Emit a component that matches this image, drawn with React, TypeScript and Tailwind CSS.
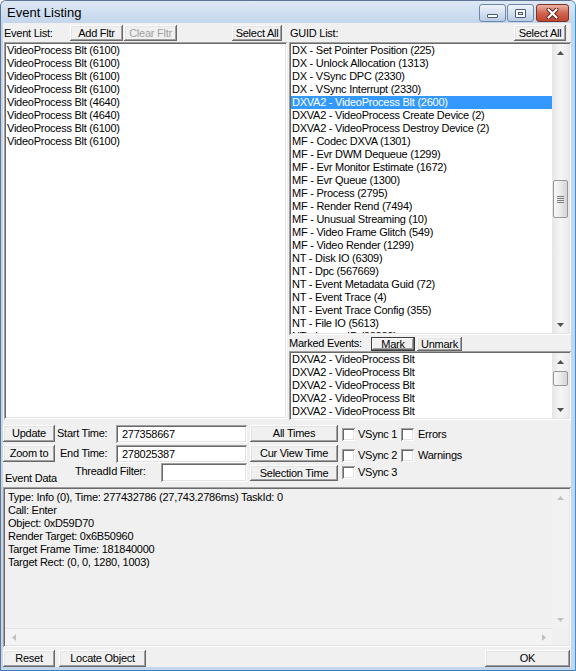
import React from "react";

const raised =
  "shadow-[inset_-1px_-1px_0_0_#696969,inset_1px_1px_0_0_#ffffff,inset_-2px_-2px_0_0_#a0a0a0,inset_2px_2px_0_0_#e3e3e3]";
const raisedDefault =
  "shadow-[inset_0_0_0_1px_#3c3c3c,inset_-2px_-2px_0_0_#696969,inset_2px_2px_0_0_#ffffff,inset_-3px_-3px_0_0_#a0a0a0]";
const sunken =
  "shadow-[inset_1px_1px_0_0_#a0a0a0,inset_-1px_-1px_0_0_#ffffff,inset_2px_2px_0_0_#696969,inset_-2px_-2px_0_0_#e3e3e3]";

const eventRows = [
  "VideoProcess Blt (6100)",
  "VideoProcess Blt (6100)",
  "VideoProcess Blt (6100)",
  "VideoProcess Blt (6100)",
  "VideoProcess Blt (4640)",
  "VideoProcess Blt (4640)",
  "VideoProcess Blt (6100)",
  "VideoProcess Blt (6100)",
];

const guidRows = [
  "DX - Set Pointer Position (225)",
  "DX - Unlock Allocation (1313)",
  "DX - VSync DPC (2330)",
  "DX - VSync Interrupt (2330)",
  "DXVA2 - VideoProcess Blt (2600)",
  "DXVA2 - VideoProcess Create Device (2)",
  "DXVA2 - VideoProcess Destroy Device (2)",
  "MF - Codec DXVA (1301)",
  "MF - Evr DWM Dequeue (1299)",
  "MF - Evr Monitor Estimate (1672)",
  "MF - Evr Queue (1300)",
  "MF - Process (2795)",
  "MF - Render Rend (7494)",
  "MF - Unusual Streaming (10)",
  "MF - Video Frame Glitch (549)",
  "MF - Video Render (1299)",
  "NT - Disk IO (6309)",
  "NT - Dpc (567669)",
  "NT - Event Metadata Guid (72)",
  "NT - Event Trace (4)",
  "NT - Event Trace Config (355)",
  "NT - File IO (5613)",
  "NT - Image ID (38383)",
];

const markedRows = [
  "DXVA2 - VideoProcess Blt",
  "DXVA2 - VideoProcess Blt",
  "DXVA2 - VideoProcess Blt",
  "DXVA2 - VideoProcess Blt",
  "DXVA2 - VideoProcess Blt",
];

const eventData = [
  "Type: Info (0), Time: 277432786 (27,743.2786ms) TaskId: 0",
  "Call: Enter",
  "Object: 0xD59D70",
  "Render Target: 0x6B50960",
  "Target Frame Time: 181840000",
  "Target Rect: (0, 0, 1280, 1003)",
];

function Button({
  children,
  className = "",
  disabled = false,
  primary = false,
}: {
  children: React.ReactNode;
  className?: string;
  disabled?: boolean;
  primary?: boolean;
}) {
  return (
    <div
      className={`flex shrink-0 items-center justify-center whitespace-nowrap bg-[#f0f0f0] leading-[13px] ${
        primary ? raisedDefault : raised
      } ${disabled ? "text-[#a0a0a0]" : "text-black"} ${className}`}
    >
      {children}
    </div>
  );
}

function Arrow({ dir, color = "#505050" }: { dir: "up" | "down" | "left" | "right"; color?: string }) {
  const vertical = dir === "up" || dir === "down";
  const w = vertical ? 7 : 4;
  const h = vertical ? 4 : 7;
  const points = {
    up: "0,4 3.5,0 7,4",
    down: "0,0 7,0 3.5,4",
    left: "4,0 4,7 0,3.5",
    right: "0,0 0,7 4,3.5",
  }[dir];
  return (
    <svg width={w} height={h} viewBox={`0 0 ${w} ${h}`}>
      <polygon points={points} fill={color} />
    </svg>
  );
}

function Thumb({ className, grip = false }: { className: string; grip?: boolean }) {
  return (
    <div
      className={`mx-[1px] flex flex-col items-center justify-center gap-[1px] rounded-[2px] border border-[#979797] bg-linear-to-r from-[#f8f8f8] via-[#ebebeb] to-[#d4d4d4] ${className}`}
    >
      {grip &&
        [0, 1, 2, 3].map((i) => <div key={i} className="h-[1px] w-[7px] bg-[#7d7d7d]" />)}
    </div>
  );
}

function VScroll({
  thumb,
  grip = false,
  disabled = false,
}: {
  thumb?: string;
  grip?: boolean;
  disabled?: boolean;
}) {
  const color = disabled ? "#c2c2c2" : "#505050";
  return (
    <div
      className={`flex w-[17px] shrink-0 flex-col ${
        disabled
          ? "bg-[#f2f2f2]"
          : "bg-linear-to-r from-[#e6e6e6] via-[#f5f5f5] to-[#ebebeb]"
      }`}
    >
      <div className="flex h-[17px] shrink-0 items-center justify-center">
        <Arrow dir="up" color={color} />
      </div>
      <div className="min-h-0 flex-1">{thumb && <Thumb className={thumb} grip={grip} />}</div>
      <div className="flex h-[17px] shrink-0 items-center justify-center">
        <Arrow dir="down" color={color} />
      </div>
    </div>
  );
}

function Checkbox() {
  return <div className={`h-[13px] w-[13px] shrink-0 bg-white ${sunken}`} />;
}

function CaptionButtons() {
  return (
    <div className="ml-auto mr-[6px] mt-[3px] flex gap-[1px]">
      <div className="flex h-[18px] w-[27px] items-center justify-center rounded-[3px] border border-[#7088a8] bg-linear-to-b from-[#eef3fa] via-[#d5e1f0] to-[#bacde6]">
        <div className="mt-[5px] h-[4px] w-[11px] rounded-[1px] border border-[#4b5b72] bg-white" />
      </div>
      <div className="flex h-[18px] w-[27px] items-center justify-center rounded-[3px] border border-[#7088a8] bg-linear-to-b from-[#eef3fa] via-[#d5e1f0] to-[#bacde6]">
        <div className="flex h-[9px] w-[11px] items-center justify-center rounded-[1px] border border-[#4b5b72] bg-white">
          <div className="h-[3px] w-[5px] border border-[#4b5b72] bg-[#dfe8f3]" />
        </div>
      </div>
      <div className="ml-[1px] flex h-[18px] w-[33px] items-center justify-center rounded-[3px] border border-[#7a3326] bg-linear-to-b from-[#e9b3a6] via-[#d2654e] to-[#c14530]">
        <svg width="13" height="11" viewBox="0 0 13 11">
          <path d="M2.5 1.5 L10.5 9.5 M10.5 1.5 L2.5 9.5" stroke="#5a1f16" strokeWidth="4" strokeLinecap="round" />
          <path d="M2.5 1.5 L10.5 9.5 M10.5 1.5 L2.5 9.5" stroke="#ffffff" strokeWidth="2.2" strokeLinecap="round" />
        </svg>
      </div>
    </div>
  );
}

export default function App() {
  return (
    <div className="flex h-[671px] w-[576px] flex-col overflow-hidden rounded-t-[6px] border border-[#5f7392] border-r-[#2a98dc] border-b-[#3d7fb8] bg-[#c4d6ec] font-['Liberation_Sans',Arial,sans-serif] text-[11px] leading-[13px] tracking-[-0.25px] text-black">
      {/* title bar */}
      <div className="flex h-[22px] shrink-0 bg-linear-to-b from-[#dde8f5] to-[#c4d6ec]">
        <span className="ml-[6px] mt-[4px] text-[13px] leading-[16px] tracking-normal text-black">Event Listing</span>
        <CaptionButtons />
      </div>

      {/* client area */}
      <div className="ml-[2px] flex h-[644px] w-[568px] shrink-0 flex-col bg-[#f0f0f0]">
        {/* lists */}
        <div className="flex h-[396px] shrink-0">
          <div className="flex w-[285px] shrink-0 flex-col">
            <div className="flex h-[19px] shrink-0 items-start">
              <span className="ml-[1px] mt-[4px] w-[66px] shrink-0">Event List:</span>
              <Button className="mt-[2px] h-[16px] w-[53px]">Add Fltr</Button>
              <Button disabled className="ml-[1px] mt-[2px] h-[16px] w-[53px]">
                Clear Fltr
              </Button>
              <Button className="ml-[55px] mt-[2px] h-[16px] w-[50px]">Select All</Button>
            </div>
            <div className={`ml-[1px] w-[283px] flex-1 bg-white p-[2px] ${sunken}`}>
              {eventRows.map((r, i) => (
                <div key={i} className="h-[13px] whitespace-nowrap pl-[1px]">
                  {r}
                </div>
              ))}
            </div>
          </div>

          <div className="flex flex-1 flex-col">
            <div className="flex h-[19px] shrink-0 items-start">
              <span className="ml-[2px] mt-[4px]">GUID List:</span>
              <Button className="ml-auto mr-[5px] mt-[2px] h-[16px] w-[52px]">Select All</Button>
            </div>
            <div className={`ml-[1px] flex h-[293px] w-[282px] shrink-0 bg-white p-[2px] ${sunken}`}>
              <div className="min-w-0 flex-1 overflow-hidden">
                {guidRows.map((r, i) => (
                  <div
                    key={i}
                    className={`h-[13px] whitespace-nowrap pl-[1px] ${
                      i === 4 ? "bg-[#3399ff] text-white" : ""
                    }`}
                  >
                    {r}
                  </div>
                ))}
              </div>
              <VScroll thumb="mt-[119px] h-[38px]" grip />
            </div>
            <div className="flex h-[16px] shrink-0 items-start">
              <span className="ml-[1px] mt-[2px] w-[82px] shrink-0 whitespace-nowrap">Marked Events:</span>
              <Button primary className="mt-[2px] h-[14px] w-[44px]">
                Mark
              </Button>
              <Button className="ml-[2px] mt-[2px] h-[14px] w-[45px]">Unmark</Button>
            </div>
            <div className={`ml-[1px] flex w-[282px] flex-1 bg-white p-[2px] ${sunken}`}>
              <div className="min-w-0 flex-1 overflow-hidden">
                {markedRows.map((r, i) => (
                  <div key={i} className="h-[13px] whitespace-nowrap pl-[1px]">
                    {r}
                  </div>
                ))}
              </div>
              <VScroll thumb="mt-[1px] h-[15px]" />
            </div>
          </div>
        </div>

        {/* time controls */}
        <div className="flex h-[68px] shrink-0 pt-[6px]">
          <div className="flex w-[52px] shrink-0 flex-col">
            <Button className="h-[17px] w-[52px]">Update</Button>
            <Button className="mt-[3px] h-[17px] w-[52px]">Zoom to</Button>
            <span className="ml-[2px] mt-[10px] whitespace-nowrap">Event Data</span>
          </div>
          <div className="flex flex-col">
            <div className="flex h-[20px] items-start">
              <span className="w-[61px] shrink-0 pl-[2px] pt-[2px]">Start Time:</span>
              <div className={`h-[18px] w-[131px] shrink-0 bg-white pl-[6px] pt-[3px] ${sunken}`}>
                277358667
              </div>
              <Button className="ml-[3px] h-[17px] w-[88px]">All Times</Button>
              <div className="ml-[4px] flex w-[59px] shrink-0 items-start pt-[3px]">
                <Checkbox />
                <span className="ml-[3px] whitespace-nowrap">VSync 1</span>
              </div>
              <div className="flex items-start pt-[3px]">
                <Checkbox />
                <span className="ml-[4px]">Errors</span>
              </div>
            </div>
            <div className="flex h-[18px] items-start">
              <span className="w-[61px] shrink-0 pl-[5px] pt-[2px]">End Time:</span>
              <div className={`h-[18px] w-[131px] shrink-0 bg-white pl-[6px] pt-[3px] ${sunken}`}>
                278025387
              </div>
              <Button className="ml-[3px] h-[17px] w-[88px]">Cur View Time</Button>
              <div className="ml-[4px] flex w-[59px] shrink-0 items-start pt-[4px]">
                <Checkbox />
                <span className="ml-[3px] whitespace-nowrap">VSync 2</span>
              </div>
              <div className="flex items-start pt-[4px]">
                <Checkbox />
                <span className="ml-[4px]">Warnings</span>
              </div>
            </div>
            <div className="flex h-[19px] items-start">
              <span className="w-[106px] shrink-0 whitespace-nowrap pl-[20px] pt-[2px]">ThreadId Filter:</span>
              <div className={`h-[19px] w-[86px] shrink-0 bg-white ${sunken}`} />
              <Button className="ml-[3px] mt-[2px] h-[16px] w-[88px]">Selection Time</Button>
              <div className="ml-[4px] flex items-start pt-[3px]">
                <Checkbox />
                <span className="ml-[3px] whitespace-nowrap">VSync 3</span>
              </div>
            </div>
          </div>
        </div>

        {/* event data */}
        <div className={`flex h-[160px] shrink-0 flex-col bg-[#f0f0f0] p-[2px] ${sunken}`}>
          <div className="flex min-h-0 flex-1">
            <div className="min-w-0 flex-1 overflow-hidden pl-[3px] pt-[2px]">
              {eventData.map((l, i) => (
                <div key={i} className="h-[13px] whitespace-nowrap">
                  {l}
                </div>
              ))}
            </div>
            <VScroll disabled />
          </div>
          <div className="flex h-[17px] shrink-0">
            <div className="flex flex-1 items-center justify-between border-t border-[#e4e4e4] bg-[#f3f3f3]">
              <div className="flex w-[17px] justify-center">
                <Arrow dir="left" color="#c2c2c2" />
              </div>
              <div className="flex w-[17px] justify-center">
                <Arrow dir="right" color="#c2c2c2" />
              </div>
            </div>
            <div className="w-[17px] bg-[#f0f0f0]" />
          </div>
        </div>

        {/* bottom buttons */}
        <div className="mt-[3px] flex h-[17px] shrink-0">
          <Button className="h-[17px] w-[52px]">Reset</Button>
          <Button className="ml-[4px] h-[17px] w-[87px]">Locate Object</Button>
          <Button className="ml-auto mr-[1px] h-[17px] w-[85px]">OK</Button>
        </div>
      </div>
    </div>
  );
}
